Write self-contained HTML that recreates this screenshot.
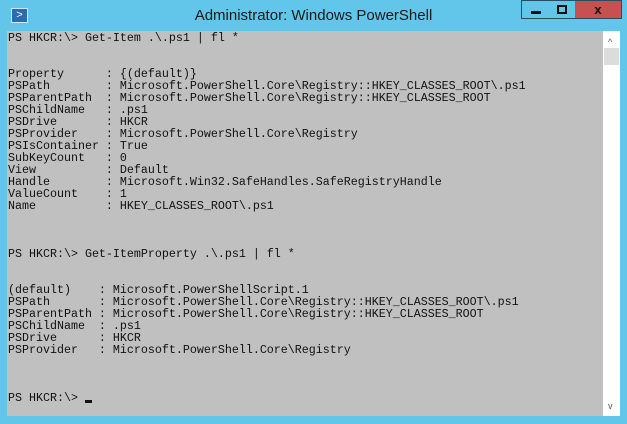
<!DOCTYPE html>
<html><head><style>
body{margin:0;width:627px;height:424px;background:#62c6ea;position:relative;overflow:hidden;font-family:"Liberation Sans",sans-serif}
.t{position:absolute;left:0;top:7px;width:627px;text-align:center;font-size:15px;color:#1a1a1a}
.ic{position:absolute;left:11px;top:8px;width:15px;height:13px;background:#2a6cb0;border:1px solid #cfe6f6;color:#fff;font-size:11px;line-height:13px;text-align:center}
.btn{position:absolute;top:0;height:19px;border:1px solid #2a4c62;box-sizing:border-box}
.con{position:absolute;left:7px;top:31px;width:596px;height:385px;background:#c0c0c0}
pre{margin:0;position:absolute;left:8px;top:32px;font-family:"Liberation Mono",monospace;font-size:11.67px;line-height:12px;color:#111}
.sb{position:absolute;left:603px;top:31px;width:17px;height:385px;background:#fff}
</style></head><body>
<div class="ic">&gt;</div>
<div class="t">Administrator: Windows PowerShell</div>
<div class="btn" style="left:521px;width:29px;background:#62c6ea"><div style="position:absolute;left:9px;top:10px;width:10px;height:3px;background:#111"></div></div>
<div class="btn" style="left:549px;width:27px;background:#62c6ea;border-left:none"><div style="position:absolute;left:8px;top:4px;width:6px;height:5px;border:2px solid #111"></div></div>
<div class="btn" style="left:575px;width:47px;background:#c75050;border-left:none;color:#111;font-weight:bold;font-size:13px;text-align:center;line-height:18px">x</div>
<div class="con"></div>
<div class="sb"><div style="position:absolute;left:1px;top:17px;width:15px;height:17px;background:#dcdcdc"></div><div style="position:absolute;left:5px;top:6px;font-size:9px;color:#555">^</div><div style="position:absolute;left:5px;top:370px;font-size:9px;color:#555">v</div></div>
<pre>PS HKCR:\&gt; Get-Item .\.ps1 | fl *


Property      : {(default)}
PSPath        : Microsoft.PowerShell.Core\Registry::HKEY_CLASSES_ROOT\.ps1
PSParentPath  : Microsoft.PowerShell.Core\Registry::HKEY_CLASSES_ROOT
PSChildName   : .ps1
PSDrive       : HKCR
PSProvider    : Microsoft.PowerShell.Core\Registry
PSIsContainer : True
SubKeyCount   : 0
View          : Default
Handle        : Microsoft.Win32.SafeHandles.SafeRegistryHandle
ValueCount    : 1
Name          : HKEY_CLASSES_ROOT\.ps1



PS HKCR:\&gt; Get-ItemProperty .\.ps1 | fl *


(default)    : Microsoft.PowerShellScript.1
PSPath       : Microsoft.PowerShell.Core\Registry::HKEY_CLASSES_ROOT\.ps1
PSParentPath : Microsoft.PowerShell.Core\Registry::HKEY_CLASSES_ROOT
PSChildName  : .ps1
PSDrive      : HKCR
PSProvider   : Microsoft.PowerShell.Core\Registry



PS HKCR:\&gt; <span style="display:inline-block;width:7px;height:3px;background:#111;vertical-align:-2px"></span></pre>
</body></html>
